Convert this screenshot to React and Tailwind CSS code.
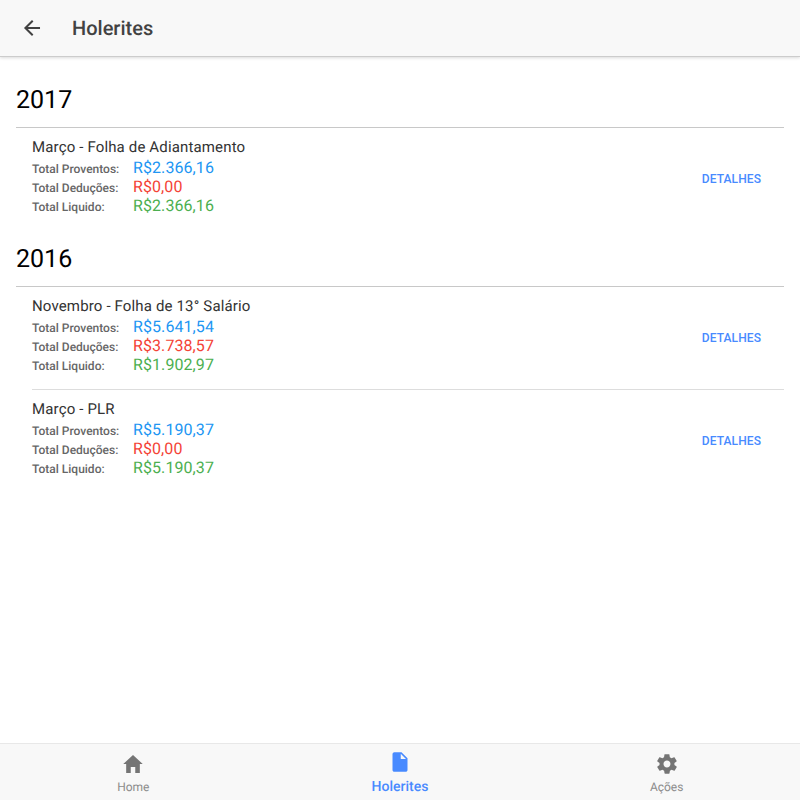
import React from 'react';

const years = [
  {
    year: '2017',
    items: [
      { title: 'Março - Folha de Adiantamento', proventos: 'R$2.366,16', deducoes: 'R$0,00', liquido: 'R$2.366,16' },
    ],
  },
  {
    year: '2016',
    items: [
      { title: 'Novembro - Folha de 13° Salário', proventos: 'R$5.641,54', deducoes: 'R$3.738,57', liquido: 'R$1.902,97' },
      { title: 'Março - PLR', proventos: 'R$5.190,37', deducoes: 'R$0,00', liquido: 'R$5.190,37' },
    ],
  },
];

const Row = ({ label, value, color }) => (
  <div className="flex h-[19px] items-center">
    <span className="w-[102px] text-[12px] font-medium text-[#666666]">{label}</span>
    <span className={`-mt-[2px] -ml-px text-[16px] tracking-[0.08px] ${color}`}>{value}</span>
  </div>
);

const Item = ({ item, first }) => (
  <div className={`ml-4 flex items-center ${first ? '' : 'mt-px border-t border-[#dddddd]'}`}>
    <div className="flex-1 pt-[9px] pb-[13px]">
      <div className="mb-[2px] text-[15px] leading-[20px] tracking-[0.15px] text-[#333333]">{item.title}</div>
      <Row label="Total Proventos:" value={item.proventos} color="text-[#2196f3]" />
      <Row label="Total Deduções:" value={item.deducoes} color="text-[#f44336]" />
      <Row label="Total Liquido:" value={item.liquido} color="text-[#4caf50]" />
    </div>
    <button className="mr-[23px] text-[12px] font-medium tracking-[0.1px] text-[#488aff]">DETALHES</button>
  </div>
);

const App = () => {
  return (
    <div className="flex h-[800px] flex-col bg-white font-['Roboto',sans-serif] [text-rendering:geometricPrecision]">
      {/* Header */}
      <div className="flex h-[57px] shrink-0 items-center border-b border-[#cccccc] bg-[#f8f8f8] shadow-[0_1px_3px_rgba(0,0,0,0.15)]">
        <svg className="ml-[20px] h-6 w-6 fill-[#424242]" viewBox="0 0 512 512">
          <path d="M427 234.625H167.296l119.702-119.702L256 85 85 256l171 171 29.922-29.924-118.626-119.701H427v-42.75z" />
        </svg>
        <h1 className="ml-[28px] text-[20px] font-medium text-[#424242]">Holerites</h1>
      </div>

      {/* Content */}
      <div className="flex-1 pl-4 pr-4 pt-[24px]">
        {years.map((group) => (
          <div key={group.year} className="mb-[11px]">
            <h2 className="h-[46px] text-[25px] leading-[39px] text-black">{group.year}</h2>
            <div className="border-t border-[#c8c8c8]">
              {group.items.map((item, i) => (
                <Item key={item.title} item={item} first={i === 0} />
              ))}
            </div>
          </div>
        ))}
      </div>

      {/* Bottom tabs */}
      <div className="grid h-[57px] shrink-0 grid-cols-3 border-t border-[#e8e8e8] bg-[#f8f8f8]">
        <div className="flex flex-col items-center pt-[8px] text-[#757575]">
          <svg className="h-6 w-6 fill-current" viewBox="0 0 512 512">
            <path d="M208 448V320h96v128h97.6V256H464L256 64 48 256h62.4v192z" />
          </svg>
          <span className="mt-[2px] text-[12px] leading-[18px] text-[#8c8c8c]">Home</span>
        </div>
        <div className="flex flex-col items-center pt-[6px] text-[#488aff]">
          <svg className="h-6 w-6 fill-current" viewBox="0 0 512 512">
            <path d="M288 48H136c-22.092 0-40 17.908-40 40v336c0 22.092 17.908 40 40 40h240c22.092 0 40-17.908 40-40V176L288 48zm-16 144V80l112 112H272z" />
          </svg>
          <span className="mt-[3px] text-[14px] font-medium leading-[20px]">Holerites</span>
        </div>
        <div className="flex flex-col items-center pt-[8px] text-[#757575]">
          <svg className="h-6 w-6 fill-current" viewBox="0 0 512 512">
            <path d="M413.967 276.8c1.06-6.235 1.06-13.518 1.06-20.8s-1.06-13.518-1.06-20.8l44.667-34.318c4.26-3.118 5.319-8.317 2.13-13.518L418.215 115.6c-2.129-4.164-8.507-6.235-12.767-4.164l-53.186 20.801c-10.638-8.318-23.394-15.601-36.16-20.801l-8.507-55.117c-1.06-4.154-5.319-8.318-10.638-8.318h-85.098c-5.318 0-9.577 4.164-10.637 8.318l-8.508 55.117c-12.767 5.2-24.464 12.482-36.171 20.801l-53.186-20.801c-5.319-2.071-10.638 0-12.767 4.164L49.1 187.365c-2.119 4.153-1.061 10.399 2.129 13.518L96.97 235.2c0 7.282-1.06 14.564-1.06 20.8s1.06 13.518 1.06 20.8l-44.668 34.318c-4.26 3.118-5.318 8.317-2.13 13.518L92.73 396.4c2.129 4.164 8.508 6.235 12.767 4.164l53.187-20.801c10.637 8.318 23.394 15.601 36.16 20.801l8.508 55.117c1.069 5.2 5.318 8.318 10.637 8.318h85.098c5.319 0 9.578-4.164 10.638-8.318l8.518-55.117c12.757-5.2 24.464-12.482 36.16-20.801l53.187 20.801c5.318 2.071 10.637 0 12.767-4.164l42.549-71.765c2.129-4.153 1.06-10.399-2.13-13.518l-46.8-34.317zm-158.499 52c-41.489 0-74.46-32.235-74.46-72.8s32.971-72.8 74.46-72.8 74.461 32.235 74.461 72.8-32.972 72.8-74.461 72.8z" />
          </svg>
          <span className="mt-[2px] text-[12px] leading-[18px] text-[#8c8c8c]">Ações</span>
        </div>
      </div>
    </div>
  );
};

export default App;
